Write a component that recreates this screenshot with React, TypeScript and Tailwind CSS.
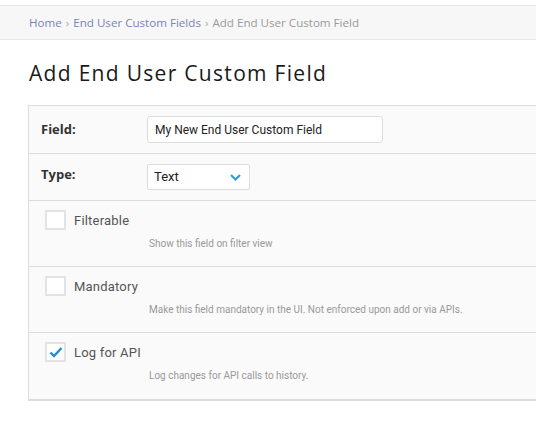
import React from "react";

function Check({ checked }: { checked?: boolean }) {
  return (
    <div className="w-[21px] h-[20px] border-2 border-[#e3e3e3] bg-white flex items-center justify-center shrink-0">
      {checked && (
        <svg width="14" height="12" viewBox="0 0 14 12">
          <path d="M1.5 6.5 L5 10 L12.5 2" fill="none" stroke="#1e8fd6" strokeWidth="2.4" />
        </svg>
      )}
    </div>
  );
}

function CheckRow({ label, desc, checked, last }: { label: string; desc: string; checked?: boolean; last?: boolean }) {
  return (
    <div className={`h-[66px] pt-[9px] pl-[16px] ${last ? "" : "border-b border-[#dddddd]"}`}>
      <div className="flex items-center gap-[8px]">
        <Check checked={checked} />
        <span className="text-[13px] text-[#555] tracking-[0.2px] mt-[1px]" style={{ fontFamily: "Roboto, sans-serif" }}>{label}</span>
      </div>
      <div className="pl-[104px] mt-[5px] text-[10px] text-[#999]" style={{ fontFamily: "Roboto, sans-serif" }}>{desc}</div>
    </div>
  );
}

export default function App() {
  return (
    <div className="w-[536px] h-[439px] bg-white overflow-hidden" style={{ fontFamily: "'Open Sans', sans-serif" }}>
      <div className="h-[5px]" />
      <div className="h-[35px] bg-[#f7f7f7] border-t border-b border-[#e8e8e8] flex items-center pl-[29px] text-[11.6px]">
        <span className="text-[#7b83b9]">Home</span>
        <span className="text-[#aaa] mx-[4px]">›</span>
        <span className="text-[#7b83b9]">End User Custom Fields</span>
        <span className="text-[#aaa] mx-[4px]">›</span>
        <span className="text-[#9a9a9a]">Add End User Custom Field</span>
      </div>
      <h1 className="pl-[29px] mt-[19px] text-[21px] leading-[28px] text-[#1a1a1a] tracking-[1.3px] font-normal">Add End User Custom Field</h1>
      <div className="ml-[28px] mt-[18px] border-l border-t border-b-2 border-[#dddddd] bg-[#fafafa] w-[520px]">
        <div className="h-[48px] border-b border-[#dddddd] flex items-center">
          <div className="w-[118px] pl-[12px] text-[13px] font-bold text-[#333]">Field:</div>
          <div className="w-[236px] h-[27px] border border-[#dddddd] rounded-[3px] bg-white flex items-center pl-[7px] text-[12px] text-[#222]" style={{ fontFamily: "Roboto, sans-serif" }}>My New End User Custom Field</div>
        </div>
        <div className="h-[47px] border-b border-[#dddddd] flex items-center">
          <div className="w-[118px] pl-[12px] text-[13px] font-bold text-[#333] -mt-[5px]">Type:</div>
          <div className="w-[103px] h-[26px] border border-[#dddddd] rounded-[2px] bg-white flex items-center justify-between pl-[6px] pr-[8px] text-[13px] text-[#222]" style={{ fontFamily: "Roboto, sans-serif" }}>
            <span>Text</span>
            <svg width="11" height="7" viewBox="0 0 11 7">
              <path d="M1 1 L5.5 5.5 L10 1" fill="none" stroke="#2b9ae0" strokeWidth="2" />
            </svg>
          </div>
        </div>
        <CheckRow label="Filterable" desc="Show this field on filter view" />
        <CheckRow label="Mandatory" desc="Make this field mandatory in the UI. Not enforced upon add or via APIs." />
        <CheckRow label="Log for API" desc="Log changes for API calls to history." checked last />
      </div>
    </div>
  );
}
